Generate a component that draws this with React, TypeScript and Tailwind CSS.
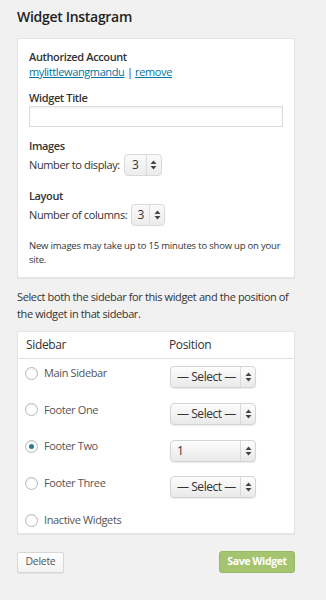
import React from "react";

const font = { fontFamily: '"Open Sans", "Noto Sans", sans-serif' };

function Arrows() {
  return (
    <svg width="7" height="10" viewBox="0 0 7 10">
      <path d="M3.5 0.5 L6.5 4 L0.5 4 Z" fill="#444" />
      <path d="M3.5 9.5 L6.5 6 L0.5 6 Z" fill="#444" />
    </svg>
  );
}

function FakeSelect({ value, width }: { value: string; width: string }) {
  return (
    <div
      className={`${width} h-[22px] flex items-stretch rounded-[4px] border border-[#d4d4d4] bg-gradient-to-b from-[#fdfdfd] to-[#e9e9e9] shadow-[0_1px_1px_rgba(0,0,0,0.08)] text-[12px] tracking-[-0.45px] text-[#333]`}
    >
      <div className="flex-1 flex items-center pl-[6px] whitespace-nowrap overflow-hidden">{value}</div>
      <div className="w-[15px] flex items-center justify-center border-l border-[#d8d8d8]">
        <Arrows />
      </div>
    </div>
  );
}

function SmallSelect({ value, width }: { value: string; width: string }) {
  return (
    <div
      className={`${width} h-[22px] flex items-stretch rounded-[4px] border border-[#d8d8d8] bg-gradient-to-b from-[#fafafa] to-[#ececec] text-[12px] text-[#333]`}
    >
      <div className="flex-1 flex items-center justify-center">{value}</div>
      <div className="w-[15px] flex items-center justify-center border-l border-[#dcdcdc]">
        <Arrows />
      </div>
    </div>
  );
}

function Radio({ checked }: { checked?: boolean }) {
  return (
    <div className="w-[13px] h-[13px] shrink-0 rounded-full border border-[#b4b9be] bg-white flex items-center justify-center shadow-[inset_0_1px_2px_rgba(0,0,0,0.07)]">
      {checked && <div className="w-[5px] h-[5px] rounded-full bg-[#2a7d8c]" />}
    </div>
  );
}

const rows: { label: string; select?: string; checked?: boolean }[] = [
  { label: "Main Sidebar", select: "— Select —" },
  { label: "Footer One", select: "— Select —" },
  { label: "Footer Two", select: "1", checked: true },
  { label: "Footer Three", select: "— Select —" },
  { label: "Inactive Widgets" },
];

const t11 = "text-[11px] tracking-[-0.38px]";

export default function App() {
  return (
    <div className="w-[326px] h-[600px] bg-[#f1f1f1] text-[#444]" style={font}>
      <div className="pl-[17px] pr-[31px]">
        <div className="pt-[6px] h-[38px] text-[14px] tracking-[-0.3px] leading-[22px] font-semibold text-[#222]">
          Widget Instagram
        </div>

        <div className="bg-white border border-[#e5e5e5] px-[11px] pt-[10px] pb-[10px] shadow-[0_1px_1px_rgba(0,0,0,0.04)]">
          <div className={`${t11} leading-[15px] font-semibold text-[#333]`}>Authorized Account</div>
          <div className={`${t11} leading-[15px] text-[#333] whitespace-nowrap`}>
            <span className="text-[#0074a2] underline">mylittlewangmandu</span>
            <span> | </span>
            <span className="text-[#0074a2] underline">remove</span>
          </div>

          <div className={`mt-[11px] ${t11} leading-[16px] font-semibold text-[#333]`}>Widget Title</div>
          <div className="h-[21px] border border-[#dddddd] shadow-[inset_0_1px_2px_rgba(0,0,0,0.07)] bg-white" />

          <div className={`mt-[11px] ${t11} leading-[16px] font-semibold text-[#333]`}>Images</div>
          <div className={`h-[22px] flex items-center gap-[4px] ${t11} text-[#333]`}>
            <span>Number to display:</span>
            <SmallSelect value="3" width="w-[38px]" />
          </div>

          <div className={`mt-[12px] ${t11} leading-[16px] font-semibold text-[#333]`}>Layout</div>
          <div className={`h-[22px] flex items-center gap-[4px] ${t11} text-[#333]`}>
            <span>Number of columns:</span>
            <SmallSelect value="3" width="w-[34px]" />
          </div>

          <div className="mt-[13px] text-[9.5px] tracking-[-0.2px] leading-[14px] text-[#333]">
            New images may take up to 15 minutes to show up on your site.
          </div>
        </div>

        <div className={`mt-[10px] ${t11} leading-[17px] text-[#333]`}>
          Select both the sidebar for this widget and the position of the widget in that sidebar.
        </div>

        <div className="mt-[9px] bg-white border border-[#e5e5e5] shadow-[0_1px_1px_rgba(0,0,0,0.04)]">
          <div className="h-[27px] flex items-center border-b border-[#e1e1e1] text-[12px] tracking-[-0.35px] text-[#333] pl-[8px]">
            <div className="w-[143px]">Sidebar</div>
            <div>Position</div>
          </div>
          <div className="pt-[7px]">
            {rows.map((r, i) => (
              <div
                key={r.label}
                className={`flex items-start pl-[7px] ${i === rows.length - 1 ? "h-[20px]" : "h-[36.75px]"}`}
              >
                <div className={`w-[145px] h-[14px] flex items-center gap-[6px] ${t11} text-[#555]`}>
                  <Radio checked={r.checked} />
                  <span className="whitespace-nowrap">{r.label}</span>
                </div>
                {r.select && <FakeSelect value={r.select} width="w-[86px]" />}
              </div>
            ))}
          </div>
        </div>

        <div className="mt-[17px] flex items-center justify-between">
          <div className="w-[47px] h-[21px] flex items-center justify-center border border-[#d6d6d6] rounded-[2px] bg-gradient-to-b from-white to-[#f3f3f3] text-[10.5px] tracking-[-0.3px] text-[#555] shadow-[0_1px_0_rgba(0,0,0,0.05)]">
            Delete
          </div>
          <div className="w-[76px] h-[22px] flex items-center justify-center rounded-[3px] bg-[#a4c46f] border border-[#98b765] text-[10.5px] tracking-[-0.4px] font-bold text-white whitespace-nowrap">
            Save Widget
          </div>
        </div>
      </div>
    </div>
  );
}
